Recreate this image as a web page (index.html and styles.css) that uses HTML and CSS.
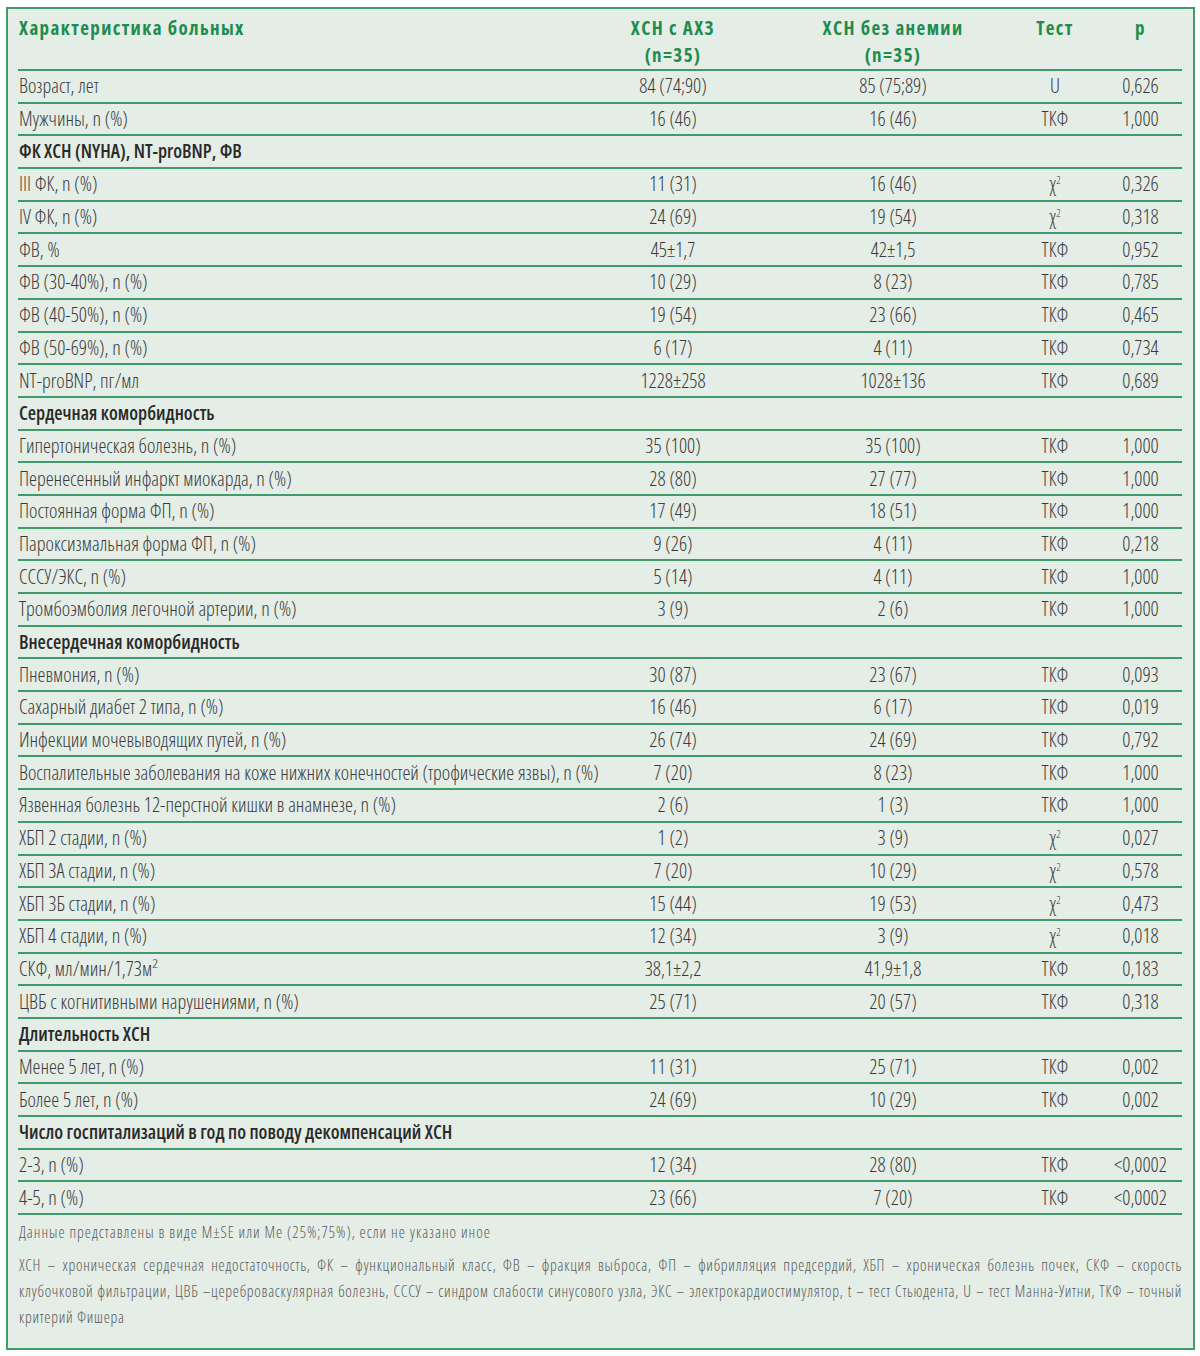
FILE: index.html
```html
<!DOCTYPE html>
<html lang="ru">
<head>
<meta charset="utf-8">
<link rel="stylesheet" href="styles.css">
</head>
<body>
<div class="card">
  <div class="row head">
    <div class="c lbl">Характеристика больных</div>
    <div class="c mid">ХСН с АХЗ<br>(n=35)</div>
    <div class="c mid">ХСН без анемии<br>(n=35)</div>
    <div class="c tst">Тест</div>
    <div class="c pv">p</div>
  </div>
  <div class="row"><div class="c lbl">Возраст, лет</div><div class="c mid">84 (74;90)</div><div class="c mid">85 (75;89)</div><div class="c tst">U</div><div class="c pv">0,626</div></div>
  <div class="row"><div class="c lbl">Мужчины, n (%)</div><div class="c mid">16 (46)</div><div class="c mid">16 (46)</div><div class="c tst">ТКФ</div><div class="c pv">1,000</div></div>
  <div class="row sec"><div class="c lbl">ФК ХСН (NYHA), NT-proBNP, ФВ</div></div>
  <div class="row"><div class="c lbl">III ФК, n (%)</div><div class="c mid">11 (31)</div><div class="c mid">16 (46)</div><div class="c tst">χ<sup>2</sup></div><div class="c pv">0,326</div></div>
  <div class="row"><div class="c lbl">IV ФК, n (%)</div><div class="c mid">24 (69)</div><div class="c mid">19 (54)</div><div class="c tst">χ<sup>2</sup></div><div class="c pv">0,318</div></div>
  <div class="row"><div class="c lbl">ФВ, %</div><div class="c mid">45±1,7</div><div class="c mid">42±1,5</div><div class="c tst">ТКФ</div><div class="c pv">0,952</div></div>
  <div class="row"><div class="c lbl">ФВ (30-40%), n (%)</div><div class="c mid">10 (29)</div><div class="c mid">8 (23)</div><div class="c tst">ТКФ</div><div class="c pv">0,785</div></div>
  <div class="row"><div class="c lbl">ФВ (40-50%), n (%)</div><div class="c mid">19 (54)</div><div class="c mid">23 (66)</div><div class="c tst">ТКФ</div><div class="c pv">0,465</div></div>
  <div class="row"><div class="c lbl">ФВ (50-69%), n (%)</div><div class="c mid">6 (17)</div><div class="c mid">4 (11)</div><div class="c tst">ТКФ</div><div class="c pv">0,734</div></div>
  <div class="row"><div class="c lbl">NT-proBNP, пг/мл</div><div class="c mid">1228±258</div><div class="c mid">1028±136</div><div class="c tst">ТКФ</div><div class="c pv">0,689</div></div>
  <div class="row sec"><div class="c lbl">Сердечная коморбидность</div></div>
  <div class="row"><div class="c lbl">Гипертоническая болезнь, n (%)</div><div class="c mid">35 (100)</div><div class="c mid">35 (100)</div><div class="c tst">ТКФ</div><div class="c pv">1,000</div></div>
  <div class="row"><div class="c lbl">Перенесенный инфаркт миокарда, n (%)</div><div class="c mid">28 (80)</div><div class="c mid">27 (77)</div><div class="c tst">ТКФ</div><div class="c pv">1,000</div></div>
  <div class="row"><div class="c lbl">Постоянная форма ФП, n (%)</div><div class="c mid">17 (49)</div><div class="c mid">18 (51)</div><div class="c tst">ТКФ</div><div class="c pv">1,000</div></div>
  <div class="row"><div class="c lbl">Пароксизмальная форма ФП, n (%)</div><div class="c mid">9 (26)</div><div class="c mid">4 (11)</div><div class="c tst">ТКФ</div><div class="c pv">0,218</div></div>
  <div class="row"><div class="c lbl">СССУ/ЭКС, n (%)</div><div class="c mid">5 (14)</div><div class="c mid">4 (11)</div><div class="c tst">ТКФ</div><div class="c pv">1,000</div></div>
  <div class="row"><div class="c lbl">Тромбоэмболия легочной артерии, n (%)</div><div class="c mid">3 (9)</div><div class="c mid">2 (6)</div><div class="c tst">ТКФ</div><div class="c pv">1,000</div></div>
  <div class="row sec"><div class="c lbl">Внесердечная коморбидность</div></div>
  <div class="row"><div class="c lbl">Пневмония, n (%)</div><div class="c mid">30 (87)</div><div class="c mid">23 (67)</div><div class="c tst">ТКФ</div><div class="c pv">0,093</div></div>
  <div class="row"><div class="c lbl">Сахарный диабет 2 типа, n (%)</div><div class="c mid">16 (46)</div><div class="c mid">6 (17)</div><div class="c tst">ТКФ</div><div class="c pv">0,019</div></div>
  <div class="row"><div class="c lbl">Инфекции мочевыводящих путей, n (%)</div><div class="c mid">26 (74)</div><div class="c mid">24 (69)</div><div class="c tst">ТКФ</div><div class="c pv">0,792</div></div>
  <div class="row"><div class="c lbl">Воспалительные заболевания на коже нижних конечностей (трофические язвы), n (%)</div><div class="c mid">7 (20)</div><div class="c mid">8 (23)</div><div class="c tst">ТКФ</div><div class="c pv">1,000</div></div>
  <div class="row"><div class="c lbl">Язвенная болезнь 12-перстной кишки в анамнезе, n (%)</div><div class="c mid">2 (6)</div><div class="c mid">1 (3)</div><div class="c tst">ТКФ</div><div class="c pv">1,000</div></div>
  <div class="row"><div class="c lbl">ХБП 2 стадии, n (%)</div><div class="c mid">1 (2)</div><div class="c mid">3 (9)</div><div class="c tst">χ<sup>2</sup></div><div class="c pv">0,027</div></div>
  <div class="row"><div class="c lbl">ХБП 3А стадии, n (%)</div><div class="c mid">7 (20)</div><div class="c mid">10 (29)</div><div class="c tst">χ<sup>2</sup></div><div class="c pv">0,578</div></div>
  <div class="row"><div class="c lbl">ХБП 3Б стадии, n (%)</div><div class="c mid">15 (44)</div><div class="c mid">19 (53)</div><div class="c tst">χ<sup>2</sup></div><div class="c pv">0,473</div></div>
  <div class="row"><div class="c lbl">ХБП 4 стадии, n (%)</div><div class="c mid">12 (34)</div><div class="c mid">3 (9)</div><div class="c tst">χ<sup>2</sup></div><div class="c pv">0,018</div></div>
  <div class="row"><div class="c lbl">СКФ, мл/мин/1,73м²</div><div class="c mid">38,1±2,2</div><div class="c mid">41,9±1,8</div><div class="c tst">ТКФ</div><div class="c pv">0,183</div></div>
  <div class="row"><div class="c lbl">ЦВБ с когнитивными нарушениями, n (%)</div><div class="c mid">25 (71)</div><div class="c mid">20 (57)</div><div class="c tst">ТКФ</div><div class="c pv">0,318</div></div>
  <div class="row sec"><div class="c lbl">Длительность ХСН</div></div>
  <div class="row"><div class="c lbl">Менее 5 лет, n (%)</div><div class="c mid">11 (31)</div><div class="c mid">25 (71)</div><div class="c tst">ТКФ</div><div class="c pv">0,002</div></div>
  <div class="row"><div class="c lbl">Более 5 лет, n (%)</div><div class="c mid">24 (69)</div><div class="c mid">10 (29)</div><div class="c tst">ТКФ</div><div class="c pv">0,002</div></div>
  <div class="row sec"><div class="c lbl">Число госпитализаций в год по поводу декомпенсаций ХСН</div></div>
  <div class="row"><div class="c lbl">2-3, n (%)</div><div class="c mid">12 (34)</div><div class="c mid">28 (80)</div><div class="c tst">ТКФ</div><div class="c pv">&lt;0,0002</div></div>
  <div class="row"><div class="c lbl">4-5, n (%)</div><div class="c mid">23 (66)</div><div class="c mid">7 (20)</div><div class="c tst">ТКФ</div><div class="c pv">&lt;0,0002</div></div>
  <div class="notes">
    <p class="note first">Данные представлены в виде M±SE или Me (25%;75%), если не указано иное</p>
    <p class="note">ХСН – хроническая сердечная недостаточность, ФК – функциональный класс, ФВ – фракция выброса, ФП – фибрилляция предсердий, ХБП – хроническая болезнь почек, СКФ – скорость клубочковой фильтрации, ЦВБ –цереброваскулярная болезнь, СССУ – синдром слабости синусового узла, ЭКС – электрокардиостимулятор, t – тест Стьюдента, U – тест Манна-Уитни, ТКФ – точный критерий Фишера</p>
  </div>
</div>
</body>
</html>
```

FILE: styles.css
```css
html, body {
  margin: 0;
  padding: 0;
  background: #ffffff;
}
body {
  font-family: "Open Sans", "DejaVu Sans", sans-serif;
  font-stretch: 75%;
  font-weight: 300;
  color: #3a3a3a;
}
.card {
  margin: 7px 5px 6px 6px;
  border: 2px solid #3f9a6c;
  background: #e4ede6;
  padding: 0 11px 0 10px;
  box-sizing: border-box;
  height: 1343px;
}
.row {
  display: grid;
  grid-template-columns: 565px 180px 260px 64px 1fr;
  height: 32.7px;
  border-bottom: 2px solid #3f9a6c;
  box-sizing: border-box;
  font-size: 20px;
  align-items: center;
}
.c {
  white-space: nowrap;
  line-height: 1;
}
.lbl { padding-left: 1px; }
.mid, .tst { text-align: center; }
.pv { text-align: center; padding-left: 12px; }
.head {
  height: 62px;
  align-items: start;
  padding-top: 6px;
  color: #1e8c4e;
  font-weight: 700;
  font-size: 19px;
  letter-spacing: 1.4px;
}
.head .c { line-height: 27px; }
.sec {
  font-weight: 600;
  font-size: 19px;
  color: #2a2a2a;
}
sup {
  font-size: 11px;
  vertical-align: 7px;
  line-height: 0;
}
.notes {
  padding-top: 4px;
  color: #5a5a5a;
  font-size: 15.5px;
  letter-spacing: 0.72px;
}
.note {
  margin: 0;
  line-height: 26px;
  padding-left: 1px;
  text-align: justify;
}
.note.first {
  margin-bottom: 7px;
  letter-spacing: 1px;
}
```
